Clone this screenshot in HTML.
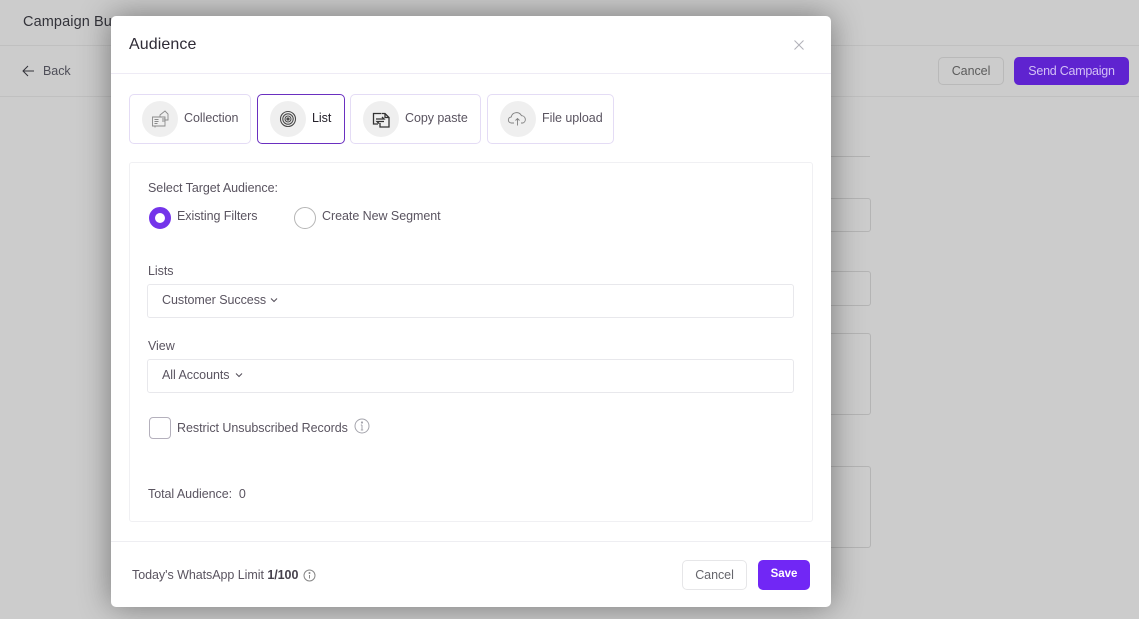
<!DOCTYPE html>
<html><head><meta charset="utf-8"><style>
*{box-sizing:border-box;margin:0;padding:0}
html,body{width:1139px;height:619px;overflow:hidden}
body{position:relative;background:#cccccc;font-family:"Liberation Sans",sans-serif;color:#4a4550}
.a{position:absolute;white-space:nowrap}
.t{font-size:12.5px;line-height:16px;letter-spacing:-.05px;color:#5a5460}
.hl{position:absolute;height:1px;background:#c0c0c0}
.bgbox{position:absolute;border:1px solid #b4b4b4;border-radius:3px}
#modal{position:absolute;left:111px;top:16px;width:720px;height:591px;background:#fff;border-radius:5px;box-shadow:0 0 32px rgba(0,0,0,.42)}
.tab{position:absolute;top:94px;height:50px;border:1px solid #e4dcf5;border-radius:5px;background:#fff}
.tab .c{position:absolute;left:12px;top:6px;width:36px;height:36px;border-radius:50%;background:#efefef}
.tab svg{position:absolute;left:12px;top:6px}
.field{position:absolute;left:147px;width:647px;height:34px;border:1px solid #e8e8ec;border-radius:3px}
</style></head><body>
<div class="a" style="left:23px;top:13px;width:88px;overflow:hidden;font-size:14.5px;line-height:18px;letter-spacing:.1px;color:#33333a">Campaign Builder</div>
<div class="hl" style="left:0;top:45px;width:1139px"></div>
<div class="hl" style="left:0;top:96px;width:1139px"></div>
<svg class="a" style="left:22px;top:65px" width="13" height="12" viewBox="0 0 13 12" fill="none" stroke="#33333a" stroke-width="1"><path d="M12 6H1M6 1 1 6l5 5"/></svg>
<div class="a t" style="left:43px;top:63px;color:#4e4e58">Back</div>
<div class="a t" style="left:938px;top:57px;width:66px;height:28px;border:1px solid #b9b9b9;border-radius:5px;text-align:center;line-height:26px;color:#5c5c5c">Cancel</div>
<div class="a" style="left:1014px;top:57px;width:115px;height:28px;background:#5f23d0;border-radius:5px;text-align:center;line-height:28px;font-size:12.5px;letter-spacing:-.25px;color:#d3c0f5">Send Campaign</div>
<div class="hl" style="left:800px;top:156px;width:70px;background:#b4b4b4"></div>
<div class="bgbox" style="left:800px;top:198px;width:71px;height:34px"></div>
<div class="bgbox" style="left:800px;top:271px;width:71px;height:35px"></div>
<div class="bgbox" style="left:800px;top:333px;width:71px;height:82px"></div>
<div class="bgbox" style="left:800px;top:466px;width:71px;height:82px"></div>

<div id="modal"></div>
<div class="a" style="left:129px;top:35px;font-size:16px;line-height:19px;letter-spacing:.1px;color:#2f2b36">Audience</div>
<svg class="a" style="left:793px;top:39px" width="12" height="12" viewBox="0 0 12 12" stroke="#b0b0b8" stroke-width="1"><path d="M1.500 1.500l9 9M10.500 1.500l-9 9"/></svg>
<div class="hl" style="left:111px;top:73px;width:720px;background:#eeebf5"></div>

<div class="tab" style="left:129px;width:122px"><div class="c"></div>
<svg width="36" height="36" viewBox="0 0 36 36" fill="none" stroke="#8a8a8a" stroke-width=".9"><path d="M10.500 16h12.500v9H10.500zM12.500 18.500h4M12.500 20.500h4M12.500 22.500h3M13 25v1.500M18 16v-2l5-4 3 3v6h-3M20 18h3M20 20h3"/></svg>
<div class="a t" style="left:54px;top:15px">Collection</div></div>
<div class="tab" style="left:257px;width:88px;border-color:#6a2fc0"><div class="c"></div>
<svg width="36" height="36" viewBox="0 0 36 36" fill="none" stroke="#4a4a4a" stroke-width="1.100"><circle cx="18" cy="18" r="7.500"/><circle cx="18" cy="18" r="5.200"/><circle cx="18" cy="18" r="3"/><circle cx="18" cy="18" r="1.100" fill="#4a4a4a"/></svg>
<div class="a t" style="left:54px;top:15px;color:#25222b">List</div></div>
<div class="tab" style="left:350px;width:131px"><div class="c"></div>
<svg width="36" height="36" viewBox="0 0 36 36" fill="none" stroke="#333" stroke-width="1.300"><path d="M15 23h-4.500V12.500H18M18.500 12.500h3.500l4 4V26h-9v-4M22 12.500v4h4M13 18h8l-2-2M21 20.500h-7l2 2"/></svg>
<div class="a t" style="left:54px;top:15px">Copy paste</div></div>
<div class="tab" style="left:487px;width:127px"><div class="c"></div>
<svg width="36" height="36" viewBox="0 0 36 36" fill="none" stroke="#808080" stroke-width=".9"><path d="M14 22h-2.500a3 3 0 0 1-.3-6 5.500 5.500 0 0 1 10.300-1.300 3.800 3.800 0 0 1 1.500 7.300h-2M17.500 24.500v-7M15.500 19.500l2-2 2 2"/></svg>
<div class="a t" style="left:54px;top:15px">File upload</div></div>

<div class="a" style="left:129px;top:162px;width:684px;height:360px;border:1px solid #f0f0f3;border-radius:3px"></div>
<div class="a t" style="left:148px;top:180px">Select Target Audience:</div>
<div class="a" style="left:149px;top:207px;width:22px;height:22px;border-radius:50%;border:6px solid #7434ea;background:#fff"></div>
<div class="a t" style="left:177px;top:208px">Existing Filters</div>
<div class="a" style="left:294px;top:207px;width:22px;height:22px;border-radius:50%;border:1px solid #b5b5b5;background:#fff"></div>
<div class="a t" style="left:322px;top:208px">Create New Segment</div>

<div class="a t" style="left:148px;top:263px">Lists</div>
<div class="field" style="top:284px"></div>
<div class="a t" style="left:162px;top:292px">Customer Success</div>
<svg class="a" style="left:270px;top:297px" width="8" height="6" viewBox="0 0 8 6" fill="none" stroke="#56505c" stroke-width="1.100"><path d="M1 1.500l3 3 3-3"/></svg>

<div class="a t" style="left:148px;top:338px">View</div>
<div class="field" style="top:359px"></div>
<div class="a t" style="left:162px;top:367px">All Accounts</div>
<svg class="a" style="left:235px;top:372px" width="8" height="6" viewBox="0 0 8 6" fill="none" stroke="#56505c" stroke-width="1.100"><path d="M1 1.500l3 3 3-3"/></svg>

<div class="a" style="left:149px;top:417px;width:22px;height:22px;border:1px solid #b4b0bc;border-radius:4px;background:#fff"></div>
<div class="a t" style="left:177px;top:420px">Restrict Unsubscribed Records</div>
<svg class="a" style="left:354px;top:418px" width="16" height="16" viewBox="0 0 16 16" fill="none" stroke="#a4a4ac" stroke-width="1"><circle cx="8" cy="8" r="7"/><path d="M8 7v5M6.800 12h2.400M6.800 7H8"/><circle cx="8" cy="4.500" r=".6" fill="#a4a4ac"/></svg>

<div class="a t" style="left:148px;top:486px">Total Audience:&nbsp; 0</div>
<div class="hl" style="left:111px;top:541px;width:720px;background:#eeeef2"></div>
<div class="a t" style="left:132px;top:567px">Today's WhatsApp Limit <b style="color:#46414c">1/100</b></div>
<svg class="a" style="left:303px;top:569px" width="13" height="13" viewBox="0 0 13 13" fill="none" stroke="#888" stroke-width="1"><circle cx="6.500" cy="6.500" r="5.500"/><path d="M6.500 6v3.500"/><circle cx="6.500" cy="4" r=".5" fill="#888"/></svg>
<div class="a t" style="left:682px;top:560px;width:65px;height:30px;border:1px solid #e6e6e8;border-radius:5px;text-align:center;line-height:28px;color:#66666c">Cancel</div>
<div class="a" style="left:758px;top:560px;width:52px;height:30px;background:#7127f5;border-radius:5px;text-align:center;line-height:29px;font-size:11.5px;font-weight:bold;color:#fff">Save</div>
</body></html>
